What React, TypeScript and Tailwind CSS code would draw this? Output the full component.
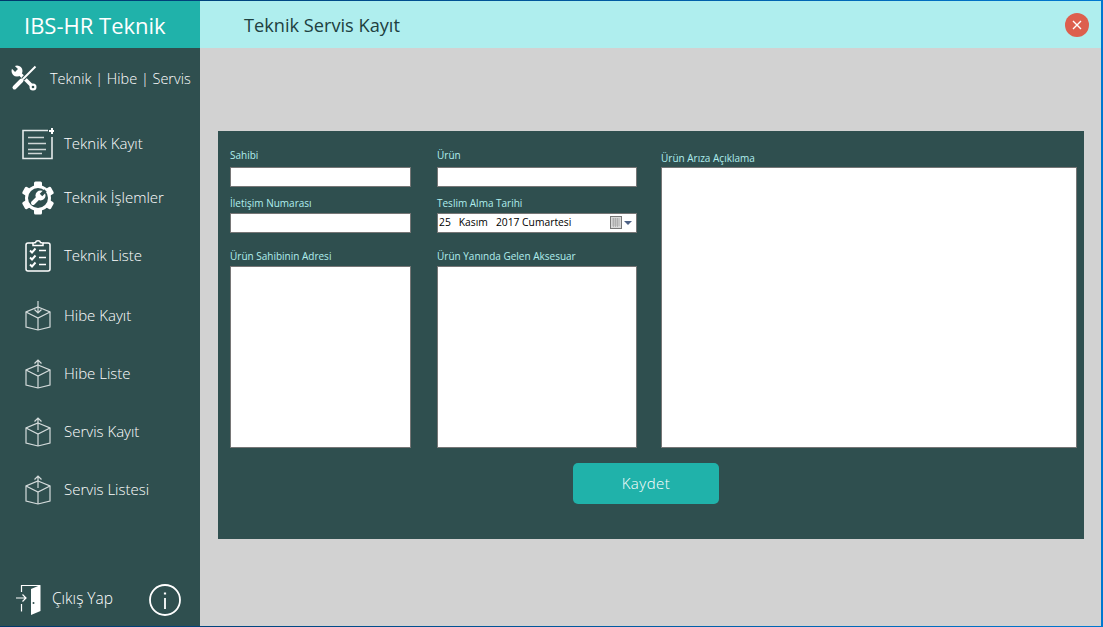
import { ReactNode } from "react";

function ToolsIcon() {
  return (
    <svg width="26" height="26" viewBox="0 0 26 26" fill="none">
      <path d="M7 7 22 22" stroke="#fff" strokeWidth="3.500" />
      <circle cx="6" cy="6" r="5.500" fill="#fff" />
      <path d="M5.500 5.500 0 0" stroke="#2f4f4f" strokeWidth="4" />
      <circle cx="22" cy="22" r="3.500" fill="#fff" />
      <circle cx="22" cy="22" r="1.300" fill="#2f4f4f" />
      <path d="M24.500 1.500 12 14" stroke="#2f4f4f" strokeWidth="4" />
      <path d="M24.500 1.500 12 14" stroke="#fff" strokeWidth="2" />
      <path d="M11 15 3.500 22.500" stroke="#2f4f4f" strokeWidth="6" />
      <path d="M10.500 15.500 3.500 22.500" stroke="#fff" strokeWidth="4" strokeLinecap="round" />
    </svg>
  );
}

function RecordIcon() {
  return (
    <svg width="32" height="32" viewBox="0 0 32 32" fill="none" stroke="#e4e9e9" strokeWidth="1.600">
      <path d="M26 2.500H1V30.500H30V9" />
      <path d="M6 9.500H22M6 15.500H24M6 21.500H24M6 25.500H20" stroke="#cfd6d6" strokeWidth="1.400" />
      <path d="M30 0V6M27 3H33" stroke="#fff" strokeWidth="2" />
    </svg>
  );
}

function GearIcon() {
  return (
    <svg width="34" height="34" viewBox="0 0 34 34">
      <g fill="#fff">
        <circle cx="17" cy="17" r="13" />
        <rect x="13" y="0.500" width="8" height="33" rx="1.500" />
        <rect x="13" y="0.500" width="8" height="33" rx="1.500" transform="rotate(60 17 17)" />
        <rect x="13" y="0.500" width="8" height="33" rx="1.500" transform="rotate(120 17 17)" />
      </g>
      <circle cx="17" cy="17" r="10" fill="#2f4f4f" />
      <path d="M12 22 18 16" stroke="#fff" strokeWidth="4" strokeLinecap="round" />
      <circle cx="19.500" cy="14.500" r="5" fill="#fff" />
      <path d="M20 14 24.500 9.500" stroke="#2f4f4f" strokeWidth="3.500" />
    </svg>
  );
}

function ClipboardIcon() {
  return (
    <svg width="26" height="34" viewBox="0 0 26 34" fill="none" stroke="#fff" strokeWidth="1.500">
      <path d="M8 4H3C1.800 4 1 4.800 1 6V30C1 31.200 1.800 32 3 32H23C24.200 32 25 31.200 25 30V6C25 4.800 24.200 4 23 4H18" />
      <path d="M8 6.500V4L10.500 3.500C11 1 15 1 15.500 3.500L18 4V6.500Z" />
      <path d="M5 11.500 7 13.500 10.500 9.500M5 18.500 7 20.500 10.500 16.500M5 25.500 7 27.500 10.500 23.500" strokeWidth="1.900" />
      <path d="M14 11.500H21M14 18.500H21M14 25.500H21" strokeWidth="1.700" />
    </svg>
  );
}

function BoxIcon({ down }: { down?: boolean }) {
  return (
    <svg width="26" height="30" viewBox="0 0 26 30" fill="none" stroke="#d5dcdc" strokeWidth="1.200">
      <path d="M13 6 25 11V26L13 29 1 26V11Z" />
      <path d="M1 11 13 17 25 11M13 17V29" />
      {down ? <path d="M13 0V12M9.500 8.500 13 12 16.500 8.500" /> : <path d="M13 13V1M9.500 4.500 13 1 16.500 4.500" />}
    </svg>
  );
}

function DoorIcon() {
  return (
    <svg width="26" height="32" viewBox="0 0 26 32" fill="none">
      <path d="M5.500 8V1.500H24" stroke="#fff" strokeWidth="1.200" />
      <path d="M5.500 20V27.500" stroke="#fff" strokeWidth="1.200" />
      <path d="M15 5 24.500 1V27L15 31Z" fill="#fff" />
      <circle cx="17.500" cy="19" r="1" fill="#2f4f4f" />
      <path d="M0 14H10M6.500 10.500 10 14 6.500 17.500" stroke="#fff" strokeWidth="1.200" />
    </svg>
  );
}

function InfoIcon() {
  return (
    <svg width="32" height="32" viewBox="0 0 32 32" fill="none" stroke="#fff">
      <circle cx="16" cy="16" r="15" strokeWidth="1.800" />
      <path d="M16 14V25" strokeWidth="1.800" />
      <path d="M16 8.500V10.500" strokeWidth="2.200" />
    </svg>
  );
}

function CalendarIcon() {
  return (
    <svg width="23" height="14" viewBox="0 0 23 14">
      <rect x="0.500" y="0.500" width="11" height="12" fill="#d8d8d8" stroke="#777" />
      <path d="M2 3H10M2 5H10M2 7H10M2 9H10M3.500 2V11M5.500 2V11M7.500 2V11" stroke="#a4a4a4" strokeWidth="0.700" />
      <path d="M14 5H22L18 9Z" fill="#4d6185" />
    </svg>
  );
}

function NavItem({ icon, label, className }: { icon: ReactNode; label: string; className: string }) {
  return (
    <div className={`flex items-center ${className}`}>
      <div className="flex w-[64px] justify-center pl-[12px]">{icon}</div>
      <span className="pb-[2px] text-[15px] font-light text-white">{label}</span>
    </div>
  );
}

function Field({ label, className, children }: { label: string; className?: string; children: ReactNode }) {
  return (
    <div className={className}>
      <div className="text-[10px] leading-[13px] text-[#afeeee]">{label}</div>
      {children}
    </div>
  );
}

const inputBox = "block w-full border border-[#767676] bg-white";

export default function App() {
  return (
    <div className="h-[627px] w-[1103px] overflow-hidden bg-gradient-to-r from-[#00386b] to-[#0078d0] pt-px pr-[2px] pb-px font-['Open_Sans',sans-serif]">
      <div className="flex h-full w-full">
        <aside className="flex w-[200px] shrink-0 flex-col bg-[#2f4f4f]">
          <div className="flex h-[47px] items-center bg-[#20b2aa] pt-[2px] pl-[24px] text-[22px] text-white">IBS-HR Teknik</div>
          <div className="flex h-[60px] items-center pl-[11px]">
            <ToolsIcon />
            <span className="ml-[13px] pt-[2px] text-[14.500px] font-light text-white">Teknik | Hibe | Servis</span>
          </div>
          <NavItem icon={<RecordIcon />} label="Teknik Kayıt" className="mt-[10px] h-[52px]" />
          <NavItem icon={<GearIcon />} label="Teknik İşlemler" className="mt-px h-[54px]" />
          <NavItem icon={<ClipboardIcon />} label="Teknik Liste" className="mt-[2px] h-[58px]" />
          <NavItem icon={<BoxIcon down />} label="Hibe Kayıt" className="mt-[2px] h-[58px]" />
          <NavItem icon={<BoxIcon />} label="Hibe Liste" className="h-[58px]" />
          <NavItem icon={<BoxIcon />} label="Servis Kayıt" className="h-[58px]" />
          <NavItem icon={<BoxIcon />} label="Servis Listesi" className="h-[58px]" />
          <div className="mt-auto mb-[10px] flex items-center pl-[16px]">
            <DoorIcon />
            <span className="ml-[10px] pb-[2px] text-[15.500px] font-light text-white">Çıkış Yap</span>
            <div className="ml-auto mr-[19px]">
              <InfoIcon />
            </div>
          </div>
        </aside>
        <main className="flex min-w-0 flex-1 flex-col bg-[#d2d2d2]">
          <header className="flex h-[47px] items-center justify-between bg-[#afeeee] pl-[44px] pr-[12px]">
            <h1 className="pt-[2px] text-[18.200px] text-[#20403f]">Teknik Servis Kayıt</h1>
            <button className="flex h-[24px] w-[24px] items-center justify-center rounded-full bg-[#dd5f4e]">
              <svg width="10" height="10" viewBox="0 0 10 10" stroke="#fff" strokeWidth="1.400">
                <path d="M1 1 9 9M9 1 1 9" />
              </svg>
            </button>
          </header>
          <section className="mt-[83px] ml-[18px] mr-[17px] h-[408px] bg-[#2f4f4f] pt-[18px] pl-[12px] pr-[7px]">
            <div className="flex">
              <div className="w-[181px] shrink-0">
                <Field label="Sahibi">
                  <input className={`${inputBox} mt-[5px] h-[20px]`} />
                </Field>
                <Field label="İletişim Numarası" className="mt-[10px]">
                  <input className={`${inputBox} mt-[3px] h-[20px]`} />
                </Field>
                <Field label="Ürün Sahibinin Adresi" className="mt-[17px]">
                  <textarea className={`${inputBox} mt-[3px] h-[182px] resize-none`} />
                </Field>
              </div>
              <div className="ml-[26px] w-[200px] shrink-0">
                <Field label="Ürün">
                  <input className={`${inputBox} mt-[5px] h-[20px]`} />
                </Field>
                <Field label="Teslim Alma Tarihi" className="mt-[10px]">
                  <div className={`${inputBox} mt-[3px] flex h-[20px] items-center pl-[1px] pr-[3px] text-[10.300px] text-black`}>
                    <span className="whitespace-pre">25   Kasım   2017 Cumartesi</span>
                    <div className="ml-auto">
                      <CalendarIcon />
                    </div>
                  </div>
                </Field>
                <Field label="Ürün Yanında Gelen Aksesuar" className="mt-[17px]">
                  <textarea className={`${inputBox} mt-[3px] h-[182px] resize-none`} />
                </Field>
              </div>
              <div className="ml-[24px] min-w-0 flex-1 pt-[3px]">
                <Field label="Ürün Arıza Açıklama">
                  <textarea className={`${inputBox} mt-[2px] h-[281px] resize-none`} />
                </Field>
              </div>
            </div>
            <div className="mt-[15px] flex justify-center pr-[15px]">
              <button className="h-[41px] w-[146px] rounded-[5px] bg-[#20b2aa] text-[15px] font-light tracking-[0.500px] text-white">Kaydet</button>
            </div>
          </section>
        </main>
      </div>
    </div>
  );
}
